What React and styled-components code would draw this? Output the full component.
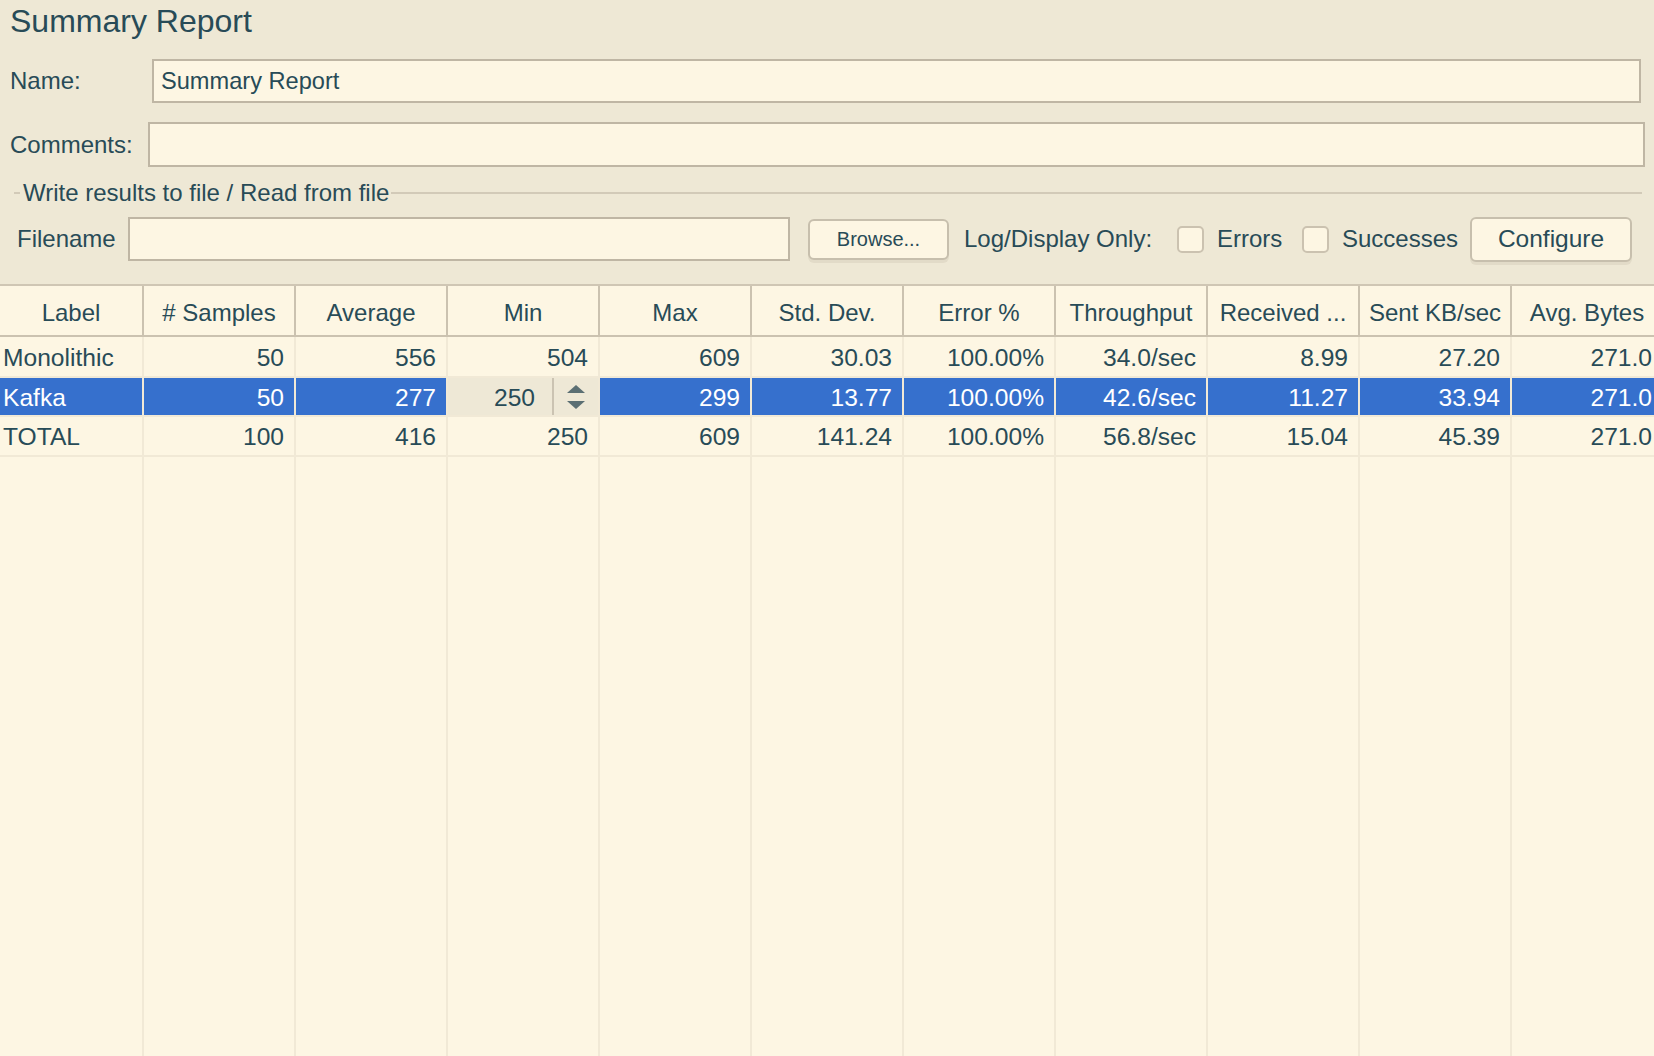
import React from "react";
import styled, { createGlobalStyle } from "styled-components";

const GlobalStyle = createGlobalStyle`
  html, body {
    margin: 0;
    padding: 0;
    height: 100%;
    overflow: hidden;
    background: #fdf6e3;
  }
  #root { height: 100%; }
`;

const Page = styled.div`
  display: flex;
  flex-direction: column;
  height: 100vh;
  width: 100%;
  overflow: hidden;
  font-family: 'Liberation Sans', Arial, Helvetica, sans-serif;
  color: #284b57;
  background: #fdf6e3;
`;

const TopPanel = styled.div`
  flex: none;
  height: 284px;
  box-sizing: border-box;
  background: #eee8d5;
  display: flex;
  flex-direction: column;
`;

const Title = styled.h1`
  margin: 1px 0 0 10px;
  font-size: 32px;
  font-weight: normal;
  line-height: 40px;
  height: 40px;
  white-space: nowrap;
`;

const FormRow = styled.div`
  display: flex;
  align-items: center;
  flex: none;
  height: ${(p) => p.$h}px;
  margin-top: ${(p) => p.$mt}px;
  padding-left: ${(p) => p.$pl}px;
  padding-right: ${(p) => p.$pr || 0}px;
`;

const FieldLabel = styled.label`
  flex: none;
  width: ${(p) => p.$w}px;
  font-size: 24px;
  white-space: nowrap;
`;

const TextField = styled.input`
  flex: ${(p) => (p.$w ? `0 0 ${p.$w}px` : "1 1 auto")};
  min-width: 0;
  height: 100%;
  box-sizing: border-box;
  margin: 0;
  border: 2px solid #bfb6a4;
  border-radius: 0;
  background: #fdf6e3;
  padding: 0 0 0 7px;
  font-family: inherit;
  font-size: 23.6px;
  color: inherit;
  outline: none;
`;

const LegendRow = styled.div`
  display: flex;
  align-items: center;
  flex: none;
  height: 24px;
  margin-top: 14px;
  padding: 0 12px 0 14px;
`;

const Rule = styled.div`
  height: 2px;
  background: #d2cab8;
  flex: ${(p) => (p.$grow ? "1 1 auto" : `0 0 ${p.$w}px`)};
`;

const LegendText = styled.span`
  font-size: 24px;
  line-height: 24px;
  margin: 0 2px 0 3px;
  white-space: nowrap;
`;

const Button = styled.button`
  flex: none;
  width: ${(p) => p.$w}px;
  height: ${(p) => p.$h}px;
  margin-left: ${(p) => p.$ml}px;
  box-sizing: border-box;
  border: 2px solid #c7bfad;
  border-radius: 6px;
  background: #fdf6e3;
  box-shadow: 0 3px 0 #e2dbc8;
  padding: 0;
  font-family: inherit;
  font-size: ${(p) => p.$fs}px;
  color: inherit;
`;

const InlineText = styled.span`
  flex: none;
  width: ${(p) => p.$w}px;
  margin-left: ${(p) => p.$ml}px;
  font-size: 24px;
  white-space: nowrap;
`;

const Checkbox = styled.span`
  flex: none;
  width: 27px;
  height: 27px;
  box-sizing: border-box;
  margin-left: ${(p) => p.$ml}px;
  border: 2px solid #cbc2b0;
  border-radius: 5px;
  background: #fdf6e3;
`;

const Table = styled.div`
  flex: 1 1 auto;
  min-height: 0;
  width: 1664px;
  display: grid;
  grid-template-columns: 144px repeat(10, 152px);
  grid-template-rows: 51px 41px 39px 40px 1fr;
  border-top: 2px solid #cfc6b4;
  background: #fdf6e3;
`;

const HeaderCell = styled.div`
  display: flex;
  align-items: center;
  justify-content: center;
  box-sizing: border-box;
  padding-top: 4px;
  border-right: 2px solid #cbc2b0;
  border-bottom: 2px solid #cbc2b0;
  font-size: 24px;
  white-space: nowrap;
  overflow: hidden;
`;

const Cell = styled.div`
  display: flex;
  align-items: center;
  justify-content: ${(p) => (p.$left ? "flex-start" : "flex-end")};
  box-sizing: border-box;
  padding: ${(p) => (p.$left ? "2px 0 0 3px" : "2px 10px 0 0")};
  border-right: 2px solid #f1e9d6;
  border-bottom: 2px solid #f1e9d6;
  background: ${(p) => (p.$sel ? "#3670cd" : "transparent")};
  color: ${(p) => (p.$sel ? "#ffffff" : "inherit")};
  font-size: 24.6px;
  white-space: nowrap;
  overflow: hidden;
`;

const SpinnerCell = styled.div`
  display: flex;
  align-items: stretch;
  box-sizing: border-box;
  border-right: 2px solid #f1e9d6;
  border-bottom: 2px solid #f1e9d6;
  background: #eee8d6;
  font-size: 24.6px;
`;

const SpinnerValue = styled.div`
  flex: 1 1 auto;
  display: flex;
  align-items: center;
  justify-content: flex-end;
  padding: 2px 17px 0 0;
`;

const SpinnerDivider = styled.div`
  flex: 0 0 2px;
  background: #cbc3b2;
`;

const SpinnerArrows = styled.div`
  flex: 0 0 44px;
  display: flex;
  align-items: center;
  justify-content: center;
`;

const FillerCell = styled.div`
  border-right: 2px solid #f1e9d6;
`;

const headers = [
  "Label",
  "# Samples",
  "Average",
  "Min",
  "Max",
  "Std. Dev.",
  "Error %",
  "Throughput",
  "Received ...",
  "Sent KB/sec",
  "Avg. Bytes",
];

const rows = [
  ["Monolithic", "50", "556", "504", "609", "30.03", "100.00%", "34.0/sec", "8.99", "27.20", "271.0"],
  ["Kafka", "50", "277", "250", "299", "13.77", "100.00%", "42.6/sec", "11.27", "33.94", "271.0"],
  ["TOTAL", "100", "416", "250", "609", "141.24", "100.00%", "56.8/sec", "15.04", "45.39", "271.0"],
];

const SpinArrows = () => (
  <svg width="18" height="24" viewBox="0 0 18 24">
    <polygon points="0,8 9,0 18,8" fill="#5b6f73" />
    <polygon points="0,16 18,16 9,24" fill="#5b6f73" />
  </svg>
);

export default function App() {
  return (
    <Page>
      <GlobalStyle />
      <TopPanel>
        <Title>Summary Report</Title>
        <FormRow $h={44} $mt={18} $pl={10} $pr={13}>
          <FieldLabel $w={142}>Name:</FieldLabel>
          <TextField readOnly value="Summary Report" />
        </FormRow>
        <FormRow $h={45} $mt={19} $pl={10} $pr={9}>
          <FieldLabel $w={138}>Comments:</FieldLabel>
          <TextField readOnly value="" />
        </FormRow>
        <LegendRow>
          <Rule $w={6} />
          <LegendText>Write results to file / Read from file</LegendText>
          <Rule $grow />
        </LegendRow>
        <FormRow $h={44} $mt={12} $pl={17}>
          <FieldLabel $w={111}>Filename</FieldLabel>
          <TextField readOnly value="" $w={662} />
          <Button $w={141} $h={41} $ml={18} $fs={20}>
            Browse...
          </Button>
          <InlineText $w={189} $ml={15}>
            Log/Display Only:
          </InlineText>
          <Checkbox $ml={24} />
          <InlineText $w={62} $ml={13}>
            Errors
          </InlineText>
          <Checkbox $ml={23} />
          <InlineText $w={112} $ml={13}>
            Successes
          </InlineText>
          <Button $w={162} $h={45} $ml={16} $fs={24.5}>
            Configure
          </Button>
        </FormRow>
      </TopPanel>
      <Table>
        {headers.map((h) => (
          <HeaderCell key={h}>{h}</HeaderCell>
        ))}
        {rows.map((r, ri) =>
          r.map((v, ci) => {
            const sel = ri === 1;
            if (sel && ci === 3) {
              return (
                <SpinnerCell key={`${ri}-${ci}`}>
                  <SpinnerValue>{v}</SpinnerValue>
                  <SpinnerDivider />
                  <SpinnerArrows>
                    <SpinArrows />
                  </SpinnerArrows>
                </SpinnerCell>
              );
            }
            return (
              <Cell key={`${ri}-${ci}`} $left={ci === 0} $sel={sel}>
                {v}
              </Cell>
            );
          })
        )}
        {headers.map((h) => (
          <FillerCell key={`f-${h}`} />
        ))}
      </Table>
    </Page>
  );
}
